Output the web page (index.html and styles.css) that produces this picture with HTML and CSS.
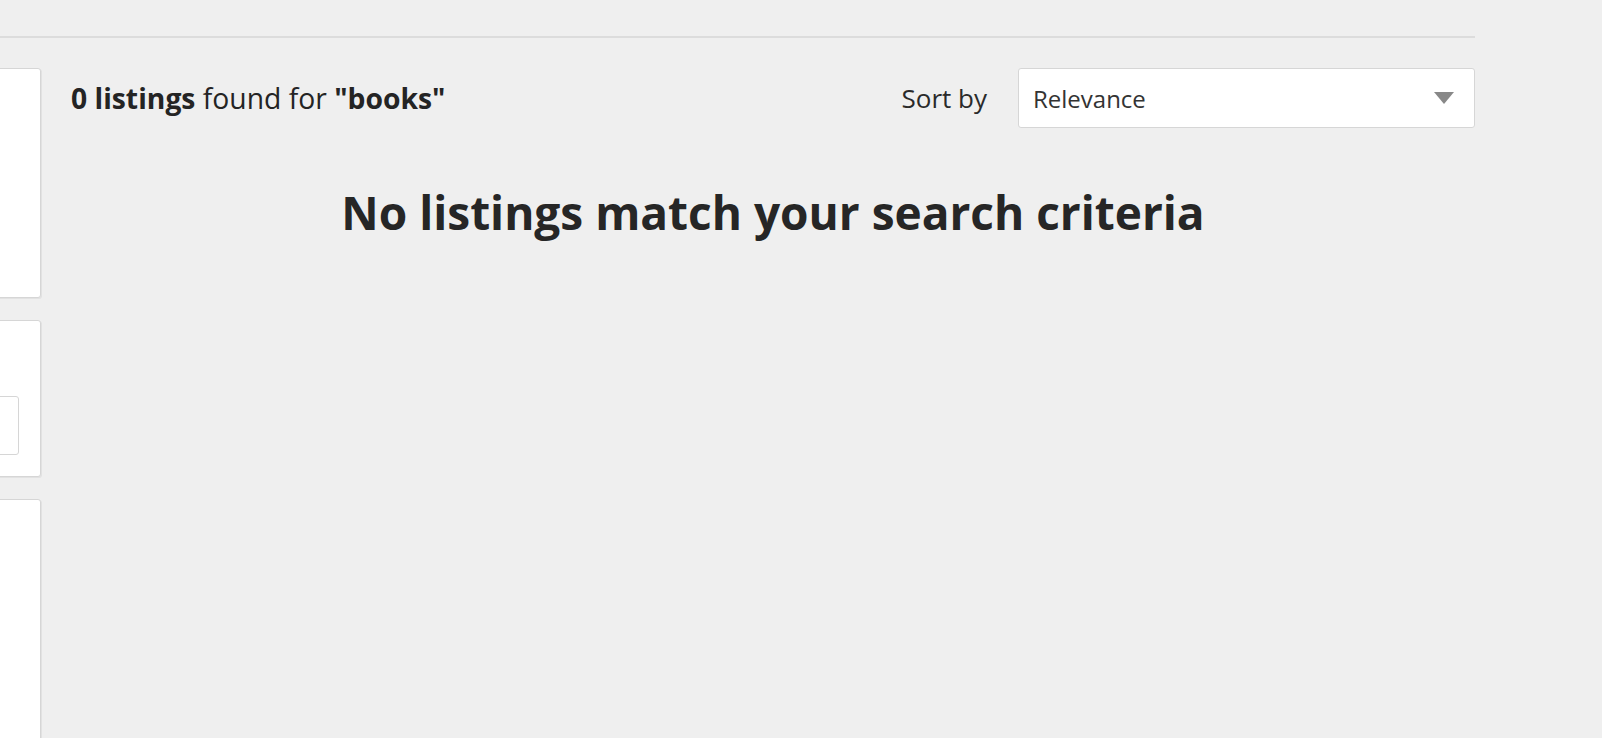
FILE: index.html
```html
<!DOCTYPE html>
<html lang="en">
<head>
<meta charset="utf-8">
<title>Search results</title>
<link rel="stylesheet" href="styles.css">
</head>
<body>
<div class="page">
  <div class="rule"></div>
  <div class="layout">
    <aside class="sidebar">
      <div class="card card-one"></div>
      <div class="card card-two"><div class="field"></div></div>
      <div class="card card-three"></div>
    </aside>
    <main class="results">
      <div class="results-head">
        <p class="count"><strong>0 listings</strong> found for <strong>"books"</strong></p>
        <div class="sort">
          <span class="sort-label">Sort by</span>
          <div class="select"><span>Relevance</span><span class="caret"></span></div>
        </div>
      </div>
      <h2 class="empty">No listings match your search criteria</h2>
    </main>
  </div>
</div>
</body>
</html>
```
FILE: styles.css
```css
html, body {
  margin: 0;
  padding: 0;
  background: #efefef;
  font-family: "Open Sans", "Noto Sans", sans-serif;
  color: #262626;
  overflow: hidden;
  height: 738px;
}
.page {
  width: 1734px;
  margin-left: -259px;
  padding-top: 36px;
}
.rule {
  height: 2px;
  background: #dcdcdc;
}
.layout {
  display: flex;
  gap: 30px;
  margin-top: 30px;
}
.sidebar {
  width: 300px;
  flex: none;
  display: flex;
  flex-direction: column;
  gap: 22px;
}
.card {
  background: #fff;
  border: 1px solid #d6d6d6;
  border-radius: 3px;
  box-shadow: 1px 1px 0 #e2e2e2;
  box-sizing: border-box;
}
.card-one { height: 230px; }
.card-two {
  height: 157px;
  padding-top: 75px;
  padding-right: 21px;
}
.card-three { height: 246px; }
.field {
  height: 59px;
  border: 1px solid #d6d6d6;
  border-radius: 3px;
  box-sizing: border-box;
}
.results {
  flex: 1;
}
.results-head {
  height: 60px;
  display: flex;
  align-items: center;
  justify-content: space-between;
}
.count {
  margin: 0;
  font-size: 28.3px;
  color: #242424;
}
.count strong { font-weight: 700; }
.sort {
  display: flex;
  align-items: center;
  gap: 31px;
}
.sort-label {
  font-size: 26px;
  color: #2a2a2a;
}
.select {
  width: 457px;
  height: 60px;
  box-sizing: border-box;
  background: #fff;
  border: 1px solid #d6d6d6;
  border-radius: 3px;
  display: flex;
  align-items: center;
  justify-content: space-between;
  padding: 0 20px 0 14px;
  font-size: 24px;
  color: #333;
}
.caret {
  width: 0;
  height: 0;
  border-left: 10px solid transparent;
  border-right: 10px solid transparent;
  border-top: 12px solid #888;
}
.empty {
  margin: 52px 0 0;
  text-align: center;
  font-size: 46px;
  line-height: 64px;
  font-weight: 700;
  color: #262626;
}
```
